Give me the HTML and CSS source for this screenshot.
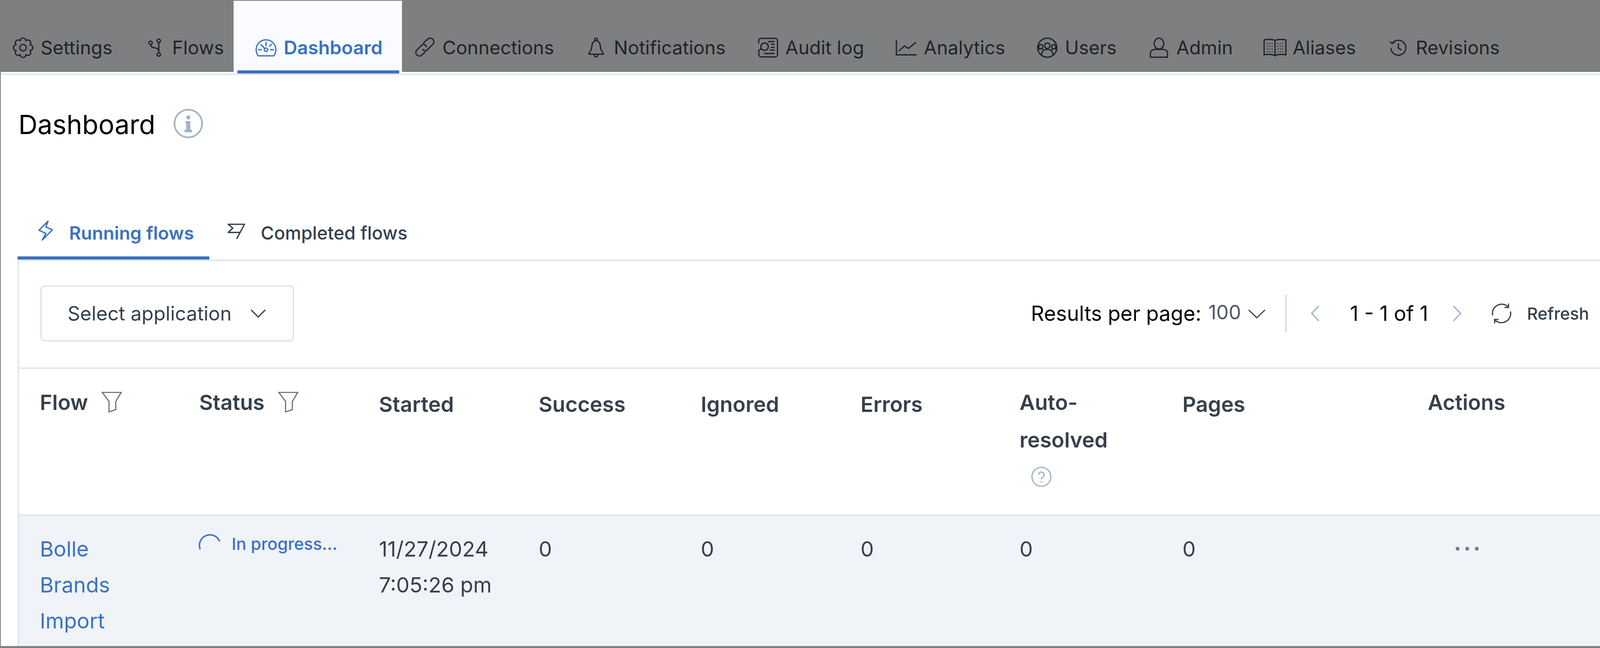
FILE: index.html
```html
<!DOCTYPE html>
<html lang="en">
<head>
<meta charset="utf-8">
<title>Dashboard</title>
<link rel="stylesheet" href="styles.css">
</head>
<body>
<nav class="topnav">
  <a class="nav-tab">
    <svg class="nav-icon" viewBox="0 0 62 62"><path d="M22.6 10.7A8.4 8.4 0 0 1 39.4 10.7A8.4 8.4 0 0 1 51.3 22.6A8.4 8.4 0 0 1 51.3 39.4A8.4 8.4 0 0 1 39.4 51.3A8.4 8.4 0 0 1 22.6 51.3A8.4 8.4 0 0 1 10.7 39.4A8.4 8.4 0 0 1 10.7 22.6A8.4 8.4 0 0 1 22.6 10.7Z"/><circle cx="31" cy="31" r="9.5"/></svg>
    <span>Settings</span>
  </a>
  <a class="nav-tab">
    <svg class="nav-icon" viewBox="0 0 62 62"><circle cx="43" cy="11" r="5"/><circle cx="19" cy="17" r="5"/><circle cx="43" cy="51" r="5"/><path d="M43 16V46M19 22C20 32 30 30 37 33C41 35 43 38 43 42"/></svg>
    <span>Flows</span>
  </a>
  <a class="nav-tab nav-tab--active">
    <svg class="nav-icon" viewBox="0 0 62 62"><path d="M8.3 55A29 29 0 1 1 53.7 55Z"/><circle cx="31" cy="37" r="5"/><path d="M31 15V25M9 37H17M44 37H53M41 27L47 21M16 22L27 33"/></svg>
    <span>Dashboard</span>
  </a>
  <a class="nav-tab">
    <svg class="nav-icon" viewBox="0 0 62 62"><path d="M28 17L40 6A10.5 10.5 0 0 1 55 21L40 36A8 8 0 0 1 26 36"/><path d="M36 28A8.5 8.5 0 0 0 24 22L7 39A10.5 10.5 0 0 0 21 54L32 45"/></svg>
    <span>Connections</span>
  </a>
  <a class="nav-tab">
    <svg class="nav-icon" viewBox="0 0 62 62"><circle cx="31" cy="7" r="4"/><path d="M27 11C20 15 19 22 18 30C17 40 13 42 10 48V50H52V48C49 42 45 40 44 30C43 22 42 15 35 11"/><path d="M26 53A5 5 0 0 0 36 53"/></svg>
    <span>Notifications</span>
  </a>
  <a class="nav-tab">
    <svg class="nav-icon" viewBox="0 0 62 62"><path d="M4 17V10A7 7 0 0 1 11 3.500H52A7 7 0 0 1 59 10V51A7 7 0 0 1 52 58H11A7 7 0 0 1 4 51V43"/><circle cx="21" cy="28" r="11"/><path d="M11 34L3 40M32 13H49M41 21H49M41 30H49M38 38H49M21 48H49"/></svg>
    <span>Audit log</span>
  </a>
  <a class="nav-tab">
    <svg class="nav-icon" viewBox="0 0 62 62"><path d="M2 10V52H60"/><path d="M10 40L26 26L38 33L58 16"/></svg>
    <span>Analytics</span>
  </a>
  <a class="nav-tab">
    <svg class="nav-icon" viewBox="0 0 62 62"><circle cx="31" cy="31" r="28"/><circle cx="31" cy="25" r="8"/><circle cx="12" cy="28" r="6"/><circle cx="50" cy="28" r="6"/><path d="M14 52C15 41 22 36 31 36C40 36 47 41 48 52M3 38C6 34 10 33 18 36M59 38C56 34 52 33 44 36"/></svg>
    <span>Users</span>
  </a>
  <a class="nav-tab">
    <svg class="nav-icon" viewBox="0 0 62 62"><ellipse cx="31" cy="19" rx="14" ry="16"/><path d="M6 59V46Q6 38 18 36H44Q56 38 56 46V59Z"/></svg>
    <span>Admin</span>
  </a>
  <a class="nav-tab">
    <svg class="nav-icon" viewBox="0 0 62 62"><path d="M31 10C24 6 10 6 -1 8V52C10 50 24 50 31 55C38 50 52 50 63 52V8C52 6 38 6 31 10ZM31 10V55"/><path class="nav-icon__dash" d="M7 19H24M7 27H24M7 35H24M7 43H24M38 19H55M38 27H55M38 35H55M38 43H55"/></svg>
    <span>Aliases</span>
  </a>
  <a class="nav-tab">
    <svg class="nav-icon" viewBox="0 0 62 62"><path d="M15 17A22 22 0 1 1 10 34"/><path d="M8 14L14 19L20 15M32 19V32L40 37"/></svg>
    <span>Revisions</span>
  </a>
</nav>

<main class="page">
  <div class="page-body">
    <div class="title-row">
      <h1 class="title">Dashboard</h1>
      <svg class="info-icon" viewBox="0 0 88 88"><circle cx="44" cy="44" r="41"/><circle class="fill" cx="44" cy="26" r="6"/><path class="fill" d="M36 37H50V62H55V70H33V62H38V44H36Z"/></svg>
    </div>

    <div class="tabs">
      <a class="tab tab--active">
        <svg class="tab-icon tab-icon--bolt" viewBox="0 0 40 56"><path d="M27 2L2 27L21 36L11 54L39 26L21 18Z"/></svg>
        <span>Running flows</span>
      </a>
      <a class="tab">
        <svg class="tab-icon tab-icon--flag" viewBox="0 0 48 44"><path d="M25 43L47 2H1L14 13L1 25H34"/></svg>
        <span>Completed flows</span>
      </a>
    </div>

    <section class="panel">
      <div class="toolbar">
        <button class="select">
          <span>Select application</span>
          <svg class="chev-select" viewBox="0 0 44 24"><path d="M2 2L22 22L42 2"/></svg>
        </button>
        <span class="results-label">Results per page:</span>
        <span class="results-value">100</span>
        <svg class="chev-results" viewBox="0 0 54 28"><path d="M2 2L27 26L52 2"/></svg>
        <span class="divider"></span>
        <svg class="page-chev" viewBox="0 0 24 46"><path d="M22 2L2 23L22 44"/></svg>
        <span class="page-count">1 - 1 of 1</span>
        <svg class="page-chev" viewBox="0 0 24 46"><path d="M2 2L22 23L2 44"/></svg>
        <svg class="refresh-icon" viewBox="0 0 64 64"><path d="M5 38A28 28 0 0 1 52 12"/><path d="M53 2V14H41"/><path d="M59 26A28 28 0 0 1 12 52"/><path d="M11 62V50H23"/></svg>
        <span class="refresh-label">Refresh</span>
      </div>

      <div class="grid-row grid-head">
        <div class="th th--raised th--filter"><span>Flow</span><svg class="filter-icon" viewBox="0 0 58 62"><path d="M1 2H57L41 29V53L21 60V29Z"/></svg></div>
        <div class="th th--raised th--filter"><span>Status</span><svg class="filter-icon" viewBox="0 0 58 62"><path d="M1 2H57L41 29V53L21 60V29Z"/></svg></div>
        <div class="th">Started</div>
        <div class="th">Success</div>
        <div class="th">Ignored</div>
        <div class="th">Errors</div>
        <div class="th th--raised">
          <span>Auto-<br>resolved</span>
          <svg class="help-icon" viewBox="0 0 60 60"><circle cx="30" cy="30" r="28"/><path d="M22 24A8 8 0 1 1 34 31C31 33 30 34 30 38"/><circle class="fill" cx="30" cy="45" r="2.500"/></svg>
        </div>
        <div class="th">Pages</div>
        <div class="th th--raised">Actions</div>
      </div>

      <div class="grid-row grid-body">
        <div class="td td--link">Bolle<br>Brands<br>Import</div>
        <div class="td td--status">
          <svg class="spinner" viewBox="0 0 64 52"><path d="M3 52A30 30 0 0 1 62 28"/></svg>
          <span>In progress...</span>
        </div>
        <div class="td">11/27/2024<br>7:05:26 pm</div>
        <div class="td">0</div>
        <div class="td">0</div>
        <div class="td">0</div>
        <div class="td">0</div>
        <div class="td">0</div>
        <div class="td"><svg class="dots" viewBox="0 0 72 14"><circle cx="6.500" cy="7" r="6"/><circle cx="36" cy="7" r="6"/><circle cx="65.500" cy="7" r="6"/></svg></div>
      </div>
    </section>
  </div>
</main>
</body>
</html>
```

FILE: styles.css
```css
* { box-sizing: border-box; }

html, body {
  margin: 0;
  width: 100%;
  height: 1658px;
  overflow: hidden;
  background: #7e7f81;
  font-family: Inter, "Liberation Sans", sans-serif;
}

svg { display: block; flex: none; fill: none; overflow: visible; }
svg .fill { fill: currentColor; stroke: none; }

/* Top nav */
.topnav {
  display: flex;
  height: 184px;
  padding: 2px 0 0 32px;
  background: #7e7f81;
  color: #1f2328;
}

.nav-tab {
  position: relative;
  display: flex;
  align-items: center;
  gap: 18px;
  height: 182px;
  margin-right: 81px;
  padding: 89px 0 31px;
  font-size: 48px;
  line-height: 62px;
  white-space: nowrap;
}

.nav-icon {
  width: 54px;
  height: 54px;
  stroke: currentColor;
  stroke-width: 3.7;
  stroke-linecap: round;
  stroke-linejoin: round;
}

.nav-icon__dash { stroke-width: 3; stroke-dasharray: 3 4; stroke-linecap: butt; }

.nav-tab--active {
  margin: 0 31px 0 -56px;
  padding-left: 56px;
  padding-right: 50px;
  background: #f9fbff;
  color: #3a72c0;
  font-weight: 600;
}

.nav-tab--active::after {
  content: "";
  position: absolute;
  left: 10px;
  right: 7px;
  top: 178px;
  height: 8px;
  background: #3a72c0;
}

/* Page */
.page {
  height: 1469px;
  padding-top: 4px;
  background: #fff;
  border-left: 2px solid #7e7f81;
  overflow: hidden;
}

.page-body {
  height: 100%;
  padding: 76px 0 0 43px;
  border-top: 4px solid #dfe7f0;
}

.title-row {
  display: flex;
  align-items: center;
  gap: 46px;
  height: 100px;
  padding-left: 2px;
}

.title {
  margin: 0;
  font-size: 68px;
  font-weight: 400;
  line-height: 100px;
  color: #000;
}

.info-icon {
  width: 76px;
  height: 76px;
  margin-top: -5px;
  color: #a0b4c8;
  stroke: #a0b4c8;
  stroke-width: 5;
}

/* Tabs */
.tabs {
  display: flex;
  margin-top: 192px;
  height: 104px;
}

.tab {
  display: flex;
  align-items: flex-start;
  padding: 0 39px 0 53px;
  font-size: 46.5px;
  font-weight: 500;
  line-height: 72px;
  color: #36404c;
  white-space: nowrap;
}

.tab--active {
  border-bottom: 8px solid #3a72c0;
  color: #3a72c0;
  font-weight: 600;
}

.tab + .tab { padding-left: 47px; }

.tab-icon { stroke: currentColor; stroke-width: 3.7; stroke-linejoin: round; }
.tab-icon--bolt { width: 37px; height: 52px; margin: 4px 42px 0 0; }
.tab-icon--flag { width: 44px; height: 40px; margin: 12px 41px 0 0; }

/* Panel */
.panel {
  border-top: 4px solid #dfe7f0;
  border-left: 4px solid #dfe7f0;
  height: 989px;
}

.toolbar {
  display: flex;
  align-items: center;
  height: 276px;
  padding: 0 28px 4px 54px;
  border-bottom: 4px solid #dfe7f0;
  color: #36404c;
}

.select {
  display: flex;
  align-items: center;
  justify-content: space-between;
  width: 650px;
  height: 144px;
  margin: 0 auto 0 0;
  padding: 0 68px 0 66px;
  background: #fff;
  border: 4px solid #dfe7f0;
  border-radius: 12px;
  font: 400 50px/1 Inter, "Liberation Sans", sans-serif;
  color: #36404c;
}

.chev-select { width: 40px; height: 22px; stroke: #36404c; stroke-width: 3.5; }

.results-label, .page-count {
  font-size: 53px;
  line-height: 72px;
  color: #000;
  white-space: nowrap;
}

.results-value {
  margin: -6px 0 0 18px;
  font-size: 50px;
  line-height: 72px;
  color: #4a5663;
}

.chev-results { width: 45px; height: 24px; margin: 2px 0 0 18px; stroke: #36404c; stroke-width: 3.5; }

.divider { width: 4px; height: 96px; margin: 0 62px 0 50px; background: #d5dde6; }

.page-chev { width: 22px; height: 42px; stroke: #9db1c6; stroke-width: 3.5; }
.page-count { margin: 0 63px 0 78px; }

.refresh-icon { width: 54px; height: 54px; margin: 0 38px 0 76px; stroke: #36404c; stroke-width: 3.7; }
.refresh-label { font-size: 43px; font-weight: 500; line-height: 72px; }

/* Table */
.grid-row {
  display: grid;
  grid-template-columns: 408fr 460fr 409fr 415fr 409fr 407fr 417fr 628fr 441fr;
  padding-left: 53px;
  color: #36404c;
}

.grid-head {
  height: 376px;
  padding-top: 43px;
  border-bottom: 4px solid #dfe7f0;
}

.th {
  font-size: 54px;
  font-weight: 600;
  line-height: 96px;
}

.th--raised { margin-top: -5px; }
.th--filter { display: flex; align-items: flex-start; gap: 36px; }
.filter-icon { width: 50px; height: 54px; margin-top: 20px; stroke: #56636f; stroke-width: 3; }

.help-icon {
  width: 52px;
  height: 52px;
  margin: 20px 0 0 30px;
  color: #a0b4c8;
  stroke: #a0b4c8;
  stroke-width: 3.7;
}

.grid-body {
  height: 340px;
  padding-top: 39px;
  background: #f0f3f8;
}

.td {
  font-size: 54px;
  line-height: 92px;
}

.td--link { color: #3a72c0; }

.td--status {
  display: flex;
  align-items: flex-start;
  gap: 29px;
  font-size: 43px;
  font-weight: 500;
  line-height: 64px;
  color: #3a72c0;
}

.spinner { width: 54px; height: 45px; margin-top: 2px; stroke: #3a72c0; stroke-width: 4.500; }

.dots { width: 60px; height: 12px; margin: 39px 0 0 71px; fill: #6f8092; }
```
